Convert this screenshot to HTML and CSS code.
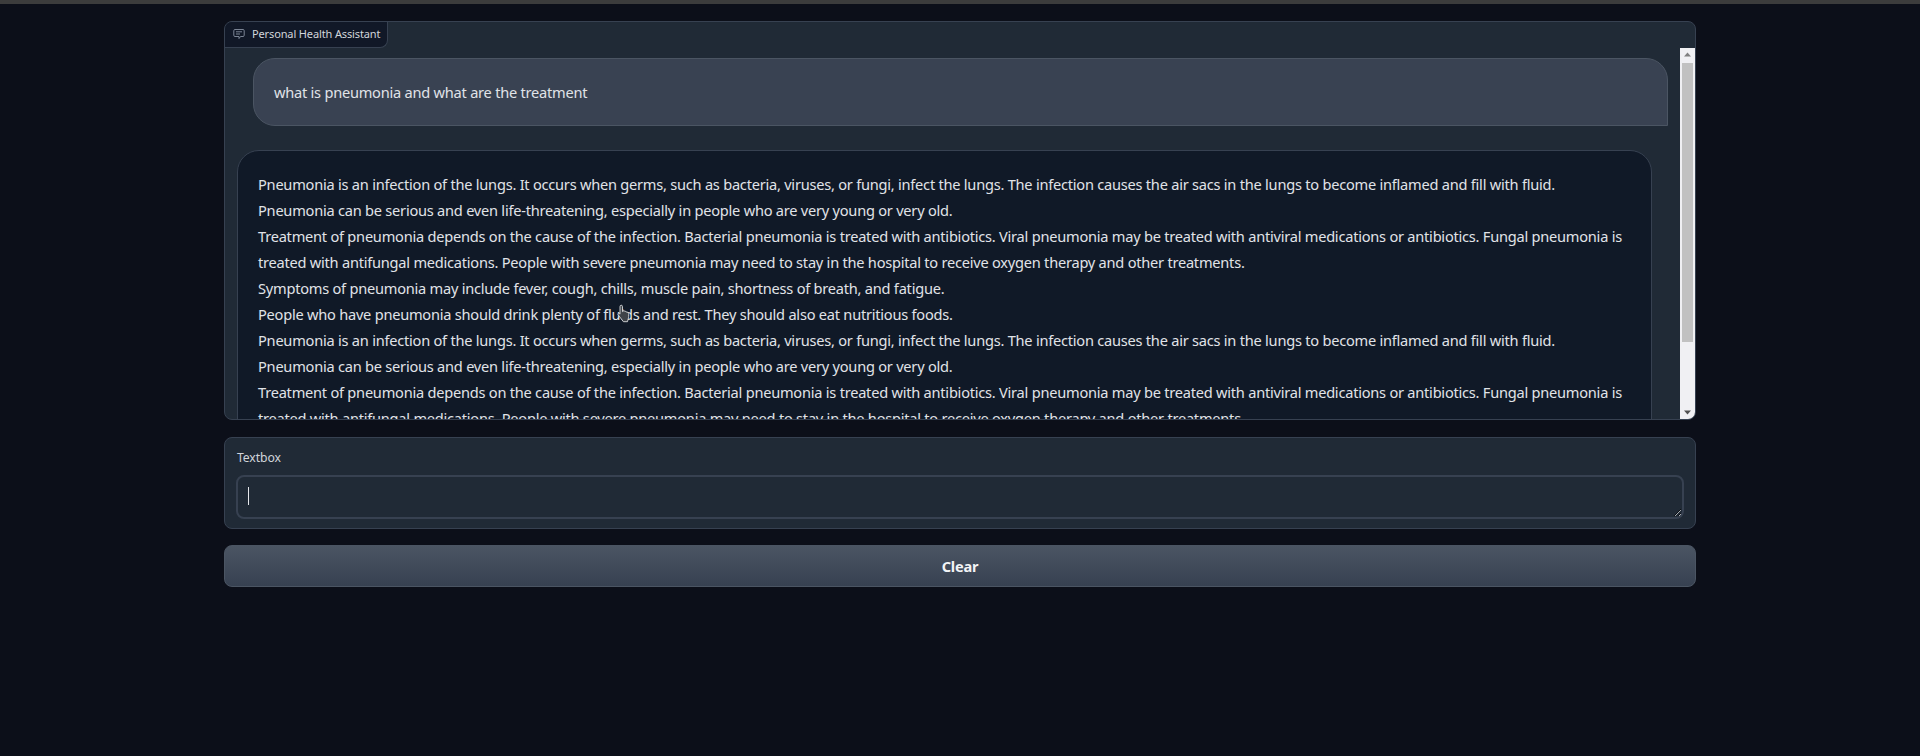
FILE: index.html
```html
<!DOCTYPE html>
<html lang="en">
<head>
<meta charset="utf-8">
<title>Personal Health Assistant</title>
<link rel="stylesheet" href="styles.css">
</head>
<body>
<div class="topbar"></div>
<main class="app">
  <section class="chatbot">
    <div class="tab">
      <svg class="tab-icon" viewBox="0 0 12 12" width="12" height="12" fill="none" stroke="currentColor" stroke-width="1"><path d="M2 1.500h8a1.200 1.200 0 0 1 1.200 1.200v4.600A1.200 1.200 0 0 1 10 8.500H7.500L6 10.600V8.500H2A1.200 1.200 0 0 1 .8 7.300V2.700A1.200 1.200 0 0 1 2 1.500z"/><path d="M3 3.800h6M3 6h4"/></svg>
      <span>Personal Health Assistant</span>
    </div>
    <div class="chat-body">
      <div class="scroller">
        <div class="bubble user">what is pneumonia and what are the treatment</div>
        <div class="bubble bot">
          <p>Pneumonia is an infection of the lungs. It occurs when germs, such as bacteria, viruses, or fungi, infect the lungs. The infection causes the air sacs in the lungs to become inflamed and fill with fluid.</p>
          <p>Pneumonia can be serious and even life-threatening, especially in people who are very young or very old.</p>
          <p>Treatment of pneumonia depends on the cause of the infection. Bacterial pneumonia is treated with antibiotics. Viral pneumonia may be treated with antiviral medications or antibiotics. Fungal pneumonia is treated with antifungal medications. People with severe pneumonia may need to stay in the hospital to receive oxygen therapy and other treatments.</p>
          <p>Symptoms of pneumonia may include fever, cough, chills, muscle pain, shortness of breath, and fatigue.</p>
          <p>People who have pneumonia should drink plenty of fluids and rest. They should also eat nutritious foods.</p>
          <p>Pneumonia is an infection of the lungs. It occurs when germs, such as bacteria, viruses, or fungi, infect the lungs. The infection causes the air sacs in the lungs to become inflamed and fill with fluid.</p>
          <p>Pneumonia can be serious and even life-threatening, especially in people who are very young or very old.</p>
          <p>Treatment of pneumonia depends on the cause of the infection. Bacterial pneumonia is treated with antibiotics. Viral pneumonia may be treated with antiviral medications or antibiotics. Fungal pneumonia is treated with antifungal medications. People with severe pneumonia may need to stay in the hospital to receive oxygen therapy and other treatments.</p>
          <p>Symptoms of pneumonia may include fever, cough, chills, muscle pain, shortness of breath, and fatigue.</p>
          <p>People who have pneumonia should drink plenty of fluids and rest. They should also eat nutritious foods.</p>
        </div>
      </div>
      <div class="scrollbar" aria-hidden="true">
        <svg class="sb-arrow" viewBox="0 0 15 15" width="15" height="15"><path d="M7.500 4.500L11 8.500H4z" fill="#808080"/></svg>
        <div class="sb-track"><div class="sb-thumb"></div></div>
        <svg class="sb-arrow" viewBox="0 0 15 15" width="15" height="15"><path d="M4 6.500h7L7.500 10.500z" fill="#505050"/></svg>
      </div>
    </div>
  </section>
  <section class="inputblock">
    <label class="inputlabel" for="box">Textbox</label>
    <div class="fieldwrap">
      <textarea id="box" class="field" rows="1"></textarea>
      <span class="caret"></span>
    </div>
  </section>
  <button class="clear" type="button">Clear</button>
</main>
<svg class="pointer" viewBox="0 0 16 19" width="16" height="19"><path d="M4.200 1.200c.8 0 1.300.6 1.300 1.400v5l.6-.2V6.800c.9-.4 1.700 0 1.800.7.900-.4 1.700 0 1.900.8.900-.3 1.800.1 1.900 1 .1 2 .1 4-.6 6l-.6 2.400H6.400L2.800 13 1 10.500c-.4-.8.500-1.500 1.300-1l.7.700V2.600c0-.8.500-1.400 1.200-1.400z" fill="#3f4349" stroke="#d8dadd" stroke-width=".9"/></svg>
</body>
</html>
```
FILE: styles.css
```css
* { box-sizing: border-box; }
html, body { margin: 0; height: 100%; }
body {
  background: #0c0f19;
  color: #e5e7eb;
  font-family: "Noto Sans", "Open Sans", sans-serif;
  overflow: hidden;
  position: relative;
}
.topbar { height: 4px; background: #3c3c3c; }
.app {
  width: 1472px;
  margin: 0 auto;
  padding-top: 17px;
  display: flex;
  flex-direction: column;
}
.chatbot {
  position: relative;
  height: 399px;
  background: #202a36;
  border: 1px solid #374151;
  border-radius: 8px;
  overflow: hidden;
  display: flex;
  flex-direction: column;
}
.tab {
  position: absolute;
  top: 0;
  left: 0;
  height: 26px;
  width: 163px;
  display: flex;
  align-items: center;
  gap: 7px;
  padding: 0 0 2px 8px;
  background: #111827;
  border-right: 1px solid #374151;
  border-bottom: 1px solid #374151;
  border-bottom-right-radius: 8px;
  color: #d1d5db;
  font-size: 11px;
  letter-spacing: -0.13px;
  white-space: nowrap;
  z-index: 1;
}
.tab-icon { color: #7b8494; flex: none; }
.chat-body {
  margin-top: 26px;
  flex: 1;
  min-height: 0;
  display: flex;
}
.scroller {
  flex: 1;
  min-width: 0;
  overflow-y: auto;
  scrollbar-width: none;
  padding-top: 10px;
}
.scrollbar {
  flex: none;
  width: 15px;
  display: flex;
  flex-direction: column;
  background: #f0f0f3;
}
.sb-arrow { flex: none; display: block; }
.sb-track { flex: 1; padding: 0 2px; }
.sb-thumb { height: 279px; background: #c1c1c1; }
.bubble {
  width: 1415px;
  padding: 20px;
  border: 1px solid #4b5563;
  border-radius: 22px;
  font-size: 14.6px;
  letter-spacing: -0.235px;
  line-height: 26px;
  color: #e0e3e8;
}
.user {
  margin-left: 28px;
  background: #394252;
  border-bottom-right-radius: 0;
}
.bot {
  margin: 24px 0 0 12px;
  background: #101927;
  border-color: #374151;
  border-bottom-left-radius: 0;
}
.bot p { margin: 0; }
.inputblock {
  margin-top: 17px;
  height: 92px;
  padding: 11px 11px 9px 11px;
  background: #202a36;
  border: 1px solid #374151;
  border-radius: 8px;
  display: flex;
  flex-direction: column;
}
.inputlabel {
  font-size: 12.2px;
  letter-spacing: -0.1px;
  line-height: 18px;
  color: #d1d5db;
  margin: 0 0 8px 1px;
}
.fieldwrap { position: relative; flex: 1; display: flex; }
.field {
  flex: 1;
  display: block;
  height: 100%;
  resize: vertical;
  background: #202a36;
  border: 2px solid #374151;
  border-radius: 8px;
  outline: none;
  color: #e5e7eb;
  font: inherit;
}
.caret {
  position: absolute;
  left: 12px;
  top: 12px;
  width: 1px;
  height: 18px;
  background: #e5e7eb;
}
.clear {
  margin-top: 16px;
  height: 42px;
  background: linear-gradient(to bottom, #4b5563, #374151);
  border: 1px solid #4b5563;
  border-radius: 8px;
  color: #f3f4f6;
  font: 700 14.6px "Noto Sans", sans-serif;
  letter-spacing: -0.2px;
}
.pointer {
  position: absolute;
  left: 617px;
  top: 304px;
}
```
